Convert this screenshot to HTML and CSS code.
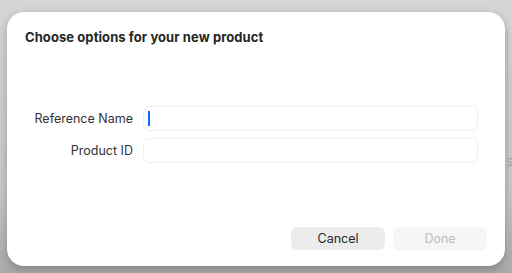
FILE: index.html
```html
<!DOCTYPE html>
<html>
<head>
<meta charset="utf-8">
<link rel="stylesheet" href="styles.css">
</head>
<body>
<div class="stage">
  <div class="dialog">
    <h1 class="title">Choose options for your new product</h1>
    <div class="form">
      <div class="row">
        <label class="label">Reference Name</label>
        <div class="field"><span class="caret"></span></div>
      </div>
      <div class="row">
        <label class="label">Product ID</label>
        <div class="field"></div>
      </div>
    </div>
    <div class="actions">
      <button class="btn">Cancel</button>
      <button class="btn disabled">Done</button>
    </div>
  </div>
  <div class="edge"><span class="edge-text">S</span></div>
</div>
</body>
</html>
```
FILE: styles.css
```css
html, body {
  margin: 0;
  padding: 0;
}
body {
  width: 512px;
  height: 273px;
  overflow: hidden;
  background: linear-gradient(#d6d6d6, #c9c9c9 70%, #a9a9a9);
  font-family: Inter, "Liberation Sans", sans-serif;
}
.stage {
  display: flex;
  height: 273px;
}
.dialog {
  margin: 12px 0 0 7px;
  width: 498px;
  height: 254px;
  background: #ffffff;
  border-radius: 17px;
  box-shadow: 0 3px 10px rgba(0,0,0,0.25);
  display: flex;
  flex-direction: column;
  box-sizing: border-box;
  padding: 17px 18px 16px 18px;
}
.title {
  margin: 0;
  font-size: 13px;
  font-weight: 700;
  color: #262626;
  line-height: 16px;
  letter-spacing: 0.08px;
}
.form {
  margin-top: 61px;
  display: flex;
  flex-direction: column;
  gap: 7px;
}
.row {
  display: flex;
  align-items: center;
  gap: 10px;
}
.label {
  width: 108px;
  text-align: right;
  font-size: 12.5px;
  color: #333;
}
.field {
  width: 335px;
  height: 25px;
  box-sizing: border-box;
  border: 1px solid #f0f0f0;
  border-radius: 6px;
  display: flex;
  align-items: center;
  padding-left: 4px;
}
.caret {
  width: 2px;
  height: 15px;
  background: #0a6cff;
}
.actions {
  margin-top: auto;
  display: flex;
  justify-content: flex-end;
  gap: 8px;
}
.btn {
  width: 94px;
  height: 23px;
  border: none;
  border-radius: 6px;
  background: #ececec;
  color: #262626;
  font-family: Inter, "Liberation Sans", sans-serif;
  font-size: 12.5px;
  padding: 0;
}
.btn.disabled {
  background: #f6f6f6;
  color: #bcbcbc;
}
.edge {
  flex: 1;
  margin: 30px 0 18px 2px;
  border-left: 1px solid #b4b4b4;
  display: flex;
  align-items: center;
  overflow: hidden;
}
.edge-text {
  font-size: 11px;
  line-height: 12px;
  color: #9a9a9a;
  margin-left: -2px;
  margin-top: 38px;
}
```
